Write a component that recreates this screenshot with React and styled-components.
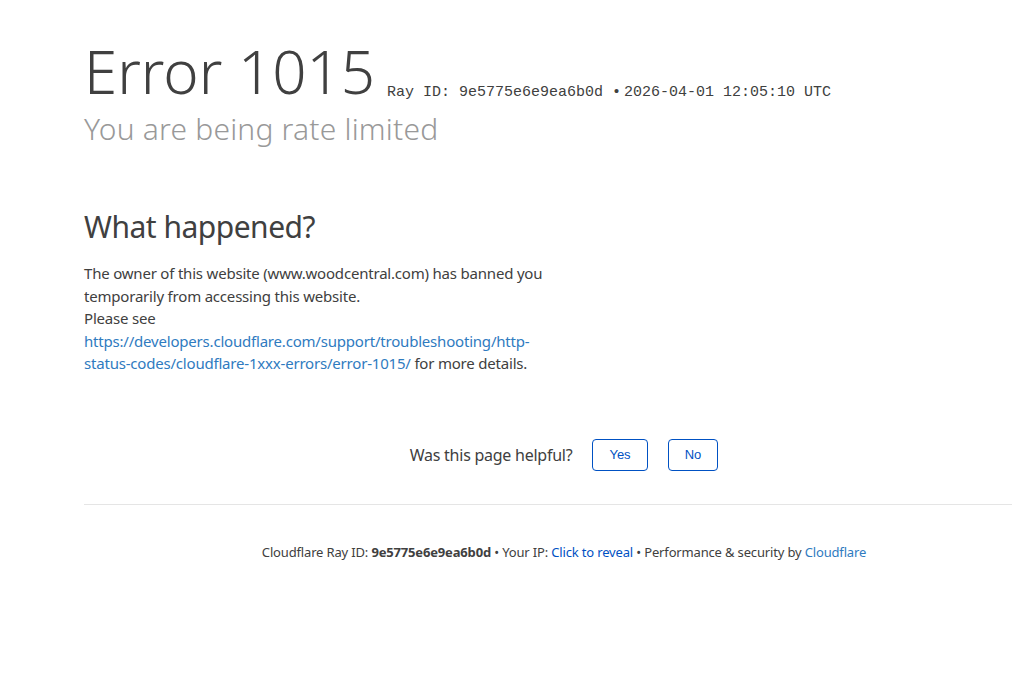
import React from 'react';
import styled, { createGlobalStyle } from 'styled-components';

const SANS = '"Noto Sans", "Open Sans", Arial, sans-serif';
const MONO = '"Liberation Mono", Courier, monospace';

const GlobalStyle = createGlobalStyle`
  html, body {
    margin: 0;
    padding: 0;
    background: #fff;
    overflow-x: hidden;
  }
  body {
    font-family: ${SANS};
    color: #404040;
    -webkit-font-smoothing: antialiased;
  }
  * {
    box-sizing: border-box;
  }
`;

const Wrapper = styled.div`
  width: 960px;
  margin-left: 84px;
  padding-top: 34px;
`;

const Header = styled.header`
  height: 75px;
  white-space: nowrap;
`;

const Title = styled.h1`
  display: inline-block;
  margin: 0 12px 0 0;
  font-size: 60px;
  font-weight: 300;
  line-height: 1.25;
  color: #404040;
`;

const RayId = styled.span`
  display: inline-block;
  vertical-align: -2px;
  font-family: ${MONO};
  font-size: 15px;
  color: #404040;
  margin-right: ${(p) => p.$gap || 0}px;
`;

const Subtitle = styled.h2`
  margin: 0;
  font-size: 30px;
  font-weight: 300;
  line-height: 1.3;
  letter-spacing: 0.2px;
  color: #999;
`;

const Columns = styled.section`
  display: flex;
  margin-top: 59px;
`;

const Column = styled.div`
  width: 50%;
`;

const SectionTitle = styled.h2`
  margin: 0 0 16px;
  font-size: 30px;
  font-weight: 400;
  line-height: 1.3;
  letter-spacing: -0.5px;
  color: #404040;
`;

const Text = styled.p`
  margin: 0;
  font-size: 15px;
  line-height: 1.5;
  letter-spacing: -0.2px;
  color: #404040;
`;

const Link = styled.a`
  color: ${(p) => (p.$dark ? '#0051c3' : '#2f7bbf')};
  text-decoration: none;
`;

const Feedback = styled.div`
  display: flex;
  justify-content: center;
  align-items: center;
  gap: 20px;
  margin-top: 64px;
`;

const FeedbackLabel = styled.span`
  font-size: 16px;
  letter-spacing: -0.25px;
  color: #404040;
`;

const FeedbackButton = styled.button`
  height: 32px;
  padding: 0 16px;
  background: #fff;
  border: 1px solid #0051c3;
  border-radius: 4px;
  color: #0051c3;
  font-family: "Liberation Sans", Arial, sans-serif;
  font-size: 13px;
  cursor: pointer;
`;

const Footer = styled.footer`
  margin-top: 33px;
  border-top: 1px solid #e5e5e5;
  padding-top: 38px;
  text-align: center;
  font-size: 13px;
  line-height: 1.5;
  letter-spacing: -0.16px;
  color: #404040;
`;

const Strong = styled.strong`
  font-weight: 700;
`;

export default function App() {
  return (
    <>
      <GlobalStyle />
      <Wrapper>
        <Header>
          <Title>Error 1015</Title>
          <RayId $gap={3}>Ray ID: 9e5775e6e9ea6b0d •</RayId>
          <RayId>2026-04-01 12:05:10 UTC</RayId>
        </Header>
        <Subtitle>You are being rate limited</Subtitle>

        <Columns>
          <Column>
            <SectionTitle>What happened?</SectionTitle>
            <Text>
              The owner of this website (www.woodcentral.com) has banned you temporarily from
              accessing this website.
            </Text>
            <Text>
              Please see{' '}
              <Link href="#">
                https://developers.cloudflare.com/support/troubleshooting/http-status-codes/cloudflare-1xxx-errors/error-1015/
              </Link>{' '}
              for more details.
            </Text>
          </Column>
          <Column />
        </Columns>

        <Feedback>
          <FeedbackLabel>Was this page helpful?</FeedbackLabel>
          <FeedbackButton>Yes</FeedbackButton>
          <FeedbackButton>No</FeedbackButton>
        </Feedback>

        <Footer>
          Cloudflare Ray ID: <Strong>9e5775e6e9ea6b0d</Strong> • Your IP:{' '}
          <Link href="#" $dark>Click to reveal</Link> • Performance &amp; security by{' '}
          <Link href="#">Cloudflare</Link>
        </Footer>
      </Wrapper>
    </>
  );
}
